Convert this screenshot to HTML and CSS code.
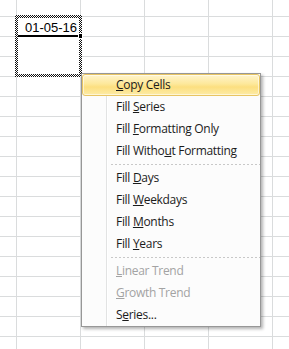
FILE: index.html
```html
<!DOCTYPE html>
<html lang="en">
<head>
  <meta charset="UTF-8" />
  <title>Auto Fill Options</title>
  <link rel="stylesheet" href="styles.css">
</head>
<body>

  <!-- Worksheet -->
  <div class="sheet">

    <!-- Selected range -->
    <div class="range">
      <div class="range-inner">
        <div class="cell-value">01-05-16<span class="fill-handle"></span></div>
      </div>
    </div>

    <!-- Auto fill menu -->
    <ul class="menu">
      <li class="item active"><u>C</u>opy Cells</li>
      <li class="item">Fill <u>S</u>eries</li>
      <li class="item">Fill <u>F</u>ormatting Only</li>
      <li class="item">Fill Witho<u>u</u>t Formatting</li>
      <li class="sep"></li>
      <li class="item">Fill <u>D</u>ays</li>
      <li class="item">Fill <u>W</u>eekdays</li>
      <li class="item">Fill <u>M</u>onths</li>
      <li class="item">Fill <u>Y</u>ears</li>
      <li class="sep"></li>
      <li class="item disabled"><u>L</u>inear Trend</li>
      <li class="item disabled"><u>G</u>rowth Trend</li>
      <li class="item">S<u>e</u>ries...</li>
    </ul>

  </div>

</body>
</html>
```

FILE: styles.css
```css
* {
  box-sizing: border-box;
  margin: 0;
  padding: 0;
}

body {
  background: #fff;
  font-family: 'Open Sans', sans-serif;
}

.sheet {
  position: relative;
  width: 289px;
  height: 349px;
  overflow: hidden;
  background-color: #fff;
  background-image:
    linear-gradient(to right, #dadcdd 1px, transparent 1px),
    linear-gradient(to bottom, #dadcdd 1px, transparent 1px);
  background-size: 64px 20px;
  background-position: 16px 16px;
}

/* marching ants round the copied range */
.range {
  position: absolute;
  left: 15px;
  top: 15px;
  width: 67px;
  height: 62px;
  padding: 3px;
  background: repeating-conic-gradient(#111 0 25%, #fff 0 50%) 0 0 / 2px 2px;
}

.range-inner {
  background: #fff;
  height: 100%;
}

.cell-value {
  position: relative;
  height: 19px;
  border-bottom: 2px solid #000;
  padding-right: 2px;
  text-align: right;
  font-family: 'Liberation Sans', sans-serif;
  font-size: 13px;
  line-height: 20px;
  color: #000;
}

.fill-handle {
  position: absolute;
  right: -4px;
  bottom: -4px;
  width: 5px;
  height: 6px;
  background: #000;
  border: 1px solid #fff;
}

.menu {
  position: absolute;
  left: 81px;
  top: 73px;
  width: 180px;
  list-style: none;
  background: #fcfcfc linear-gradient(to right, transparent 24px, #e2e3e3 24px, #e2e3e3 25px, #fff 25px, #fff 26px, transparent 26px);
  border: 1px solid #979797;
  box-shadow: 2px 2px 3px rgba(0, 0, 0, 0.3);
}

.item {
  height: 22px;
  padding-left: 33px;
  font-size: 12px;
  letter-spacing: -0.3px;
  line-height: 20px;
  color: #1b1b1b;
  border: 1px solid transparent;
  border-radius: 3px;
}

.item u {
  text-underline-offset: 1px;
}

.item.active {
  background: linear-gradient(#fff4cc, #fde89a 45%, #fcdf80 60%, #fdeba6);
  border-color: #e8c563;
  box-shadow: inset 0 0 0 1px rgba(255, 255, 255, 0.55);
}

.item.disabled {
  color: #a3a3a3;
}

.sep {
  height: 5px;
  margin-left: 29px;
  background: repeating-linear-gradient(to right, #c8c8c8 0 2px, transparent 2px 4px) 0 2px / 100% 1px no-repeat;
}
```
